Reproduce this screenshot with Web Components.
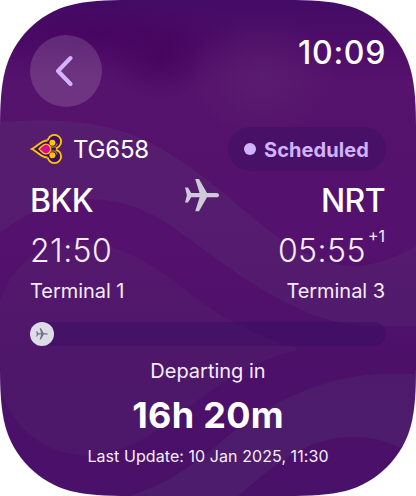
<!DOCTYPE html>
<html lang="en">
<head>
<meta charset="utf-8">
<title>Flight status</title>
<style>
  body {
    margin: 0;
    background: #ffffff;
    font-family: Inter, "Liberation Sans", sans-serif;
    --accent: #d2b3ff;
  }
</style>
</head>
<body>
<watch-screen>
  <watch-header slot="header">10:09</watch-header>
  <flight-heading>TG658<status-pill slot="status">Scheduled</status-pill></flight-heading>
  <flight-route>
    <airport-stop slot="from" code="BKK" time="21:50">Terminal 1</airport-stop>
    <airport-stop slot="to" code="NRT" time="05:55" shift="+1" align="end">Terminal 3</airport-stop>
  </flight-route>
  <flight-progress></flight-progress>
  <flight-countdown>
    <span slot="label">Departing in</span>
    16h 20m
    <span slot="updated">Last Update: 10 Jan 2025, 11:30</span>
  </flight-countdown>
</watch-screen>

<script>
const planePath = "M34 17.2C34 18.6 33 19.3 31.5 19.3H22L14 33.2H10.2L14.6 19.3H6.2L3 24.5H0L1.9 17.2L0 9.6H3L6.2 15.1H14.6L10.2 1H14L22 15.1H31.5C33 15.1 34 15.8 34 17.2Z";

function define(name, html, setup) {
  const template = document.createElement("template");
  template.innerHTML = html;
  customElements.define(name, class extends HTMLElement {
    constructor() {
      super();
      this.attachShadow({ mode: "open" });
      this.shadowRoot.appendChild(template.content.cloneNode(true));
    }

    connectedCallback() {
      if (setup) setup(this, this.shadowRoot);
    }
  });
}

define("watch-screen", `
  <style>
    :host {
      display: block;
      position: relative;
      width: 416px;
      height: 496px;
      overflow: hidden;
      color: #ffffff;
      clip-path: path("M0 130C0 80 4 55 29 29C55 4 80 0 130 0H286C336 0 361 4 387 29C412 55 416 80 416 130V366C416 416 412 441 387 467C361 492 336 496 286 496H130C80 496 55 492 29 467C4 441 0 416 0 366Z");
    }

    .backdrop {
      position: absolute;
      inset: 0;
    }

    .content {
      position: relative;
      display: flex;
      flex-direction: column;
      height: 100%;
      padding: 35px 30px 0;
      box-sizing: border-box;
    }
  </style>
  <svg class="backdrop" width="416" height="496" viewBox="0 0 416 496">
    <defs>
      <linearGradient id="base" x1="0" y1="0" x2="0" y2="1">
        <stop offset="0" stop-color="#430c66"/>
        <stop offset="0.09" stop-color="#4e0d69"/>
        <stop offset="0.17" stop-color="#56136d"/>
        <stop offset="0.5" stop-color="#54116d"/>
        <stop offset="0.74" stop-color="#4c1069"/>
        <stop offset="1" stop-color="#4a1169"/>
      </linearGradient>
      <radialGradient id="shade">
        <stop offset="0" stop-color="#43005a" stop-opacity="0.75"/>
        <stop offset="1" stop-color="#43005a" stop-opacity="0"/>
      </radialGradient>
      <radialGradient id="glow">
        <stop offset="0" stop-color="#5c2270" stop-opacity="0.6"/>
        <stop offset="1" stop-color="#5c2270" stop-opacity="0"/>
      </radialGradient>
    </defs>
    <rect width="416" height="496" fill="url(#base)"/>
    <ellipse cx="100" cy="34" rx="150" ry="36" fill="url(#shade)" opacity="0.75"/>
    <ellipse cx="160" cy="60" rx="54" ry="40" fill="url(#shade)" opacity="0.85"/>
    <ellipse cx="262" cy="76" rx="74" ry="62" fill="url(#glow)"/>
    <g fill="#5f5a78">
      <path fill-opacity="0.15" d="M0 122C60 118 112 120 160 148C205 174 229 199 262 225C300 255 330 266 355 266C380 265 400 255 416 246V326H370C335 324 315 317 285 302C235 276 210 252 165 222C110 187 50 194 0 233Z"/>
      <path fill-opacity="0.1" d="M0 300C15 262 40 243 75 242C145 240 185 300 240 325C262 336 277 343 294 347Q300 349 294 351C225 368 180 420 134 444C112 454 92 457 78 455C43 451 15 430 0 390Z"/>
      <path fill-opacity="0.16" d="M130 496C170 482 185 470 215 447C268 400 330 374 385 374H416V457C395 444 382 438 356 437C309 435 272 466 238 496Z"/>
    </g>
  </svg>
  <div class="content">
    <slot name="header"></slot>
    <slot></slot>
  </div>
`);

define("watch-header", `
  <style>
    :host {
      display: flex;
      justify-content: space-between;
      height: 72px;
      font-size: 32px;
      line-height: 35px;
      font-weight: 500;
      letter-spacing: 0.7px;
    }

    button {
      display: grid;
      place-items: center;
      width: 72px;
      height: 72px;
      padding: 0;
      border: 0;
      border-radius: 50%;
      background: rgba(255, 255, 255, 0.14);
    }

    svg {
      margin-right: 5px;
    }
  </style>
  <button aria-label="Back">
    <svg width="18" height="32" viewBox="0 0 18 32" fill="none" stroke="#d2b3ff" stroke-width="4" stroke-linecap="round" stroke-linejoin="round">
      <path d="M15.5 3L3 16L15.5 29"/>
    </svg>
  </button>
  <span><slot></slot></span>
`);

define("flight-heading", `
  <style>
    :host {
      display: flex;
      align-items: center;
      height: 44px;
      margin-top: 20px;
      font-size: 24px;
      line-height: 44px;
      letter-spacing: -0.2px;
    }

    svg {
      margin-right: 10px;
    }

    .number {
      padding-top: 2px;
    }

    .status {
      margin-left: auto;
    }
  </style>
  <svg width="33" height="32" viewBox="0 0 33 32">
    <g stroke="#ffc500" stroke-width="1.9" fill="#3a0f6a">
      <circle cx="24.4" cy="8.6" r="6.7"/>
      <circle cx="24.4" cy="23.4" r="6.7"/>
      <path d="M1.8 16C8 13 10.5 7.3 17 7.3C22 7.3 25.3 11 26 16C25.3 21 22 24.7 17 24.7C10.5 24.7 8 19 1.8 16Z" stroke="none"/>
      <path d="M17.6 7.5C10.5 7.6 8 13.2 1.8 16C8 18.8 10.5 24.4 17.6 24.5" fill="none"/>
    </g>
    <path d="M8.8 16C11.3 14.5 12.6 11.1 15.8 11.1A4.9 4.9 0 0 1 15.8 20.9C12.6 20.9 11.3 17.5 8.8 16Z" fill="#dc0a96" stroke="#ffc500" stroke-width="1.4" stroke-linejoin="round"/>
    <path d="M19.4 12.7C22.3 15.3 26.5 14.2 27 10.6M19.4 19.3C22.3 16.7 26.5 17.8 27 21.4" fill="none" stroke="#ffc500" stroke-width="0.8"/>
    <g fill="#ffc500">
      <circle cx="22.4" cy="9.8" r="3"/>
      <circle cx="22.4" cy="22.2" r="3"/>
    </g>
  </svg>
  <span class="number"><slot></slot></span>
  <span class="status"><slot name="status"></slot></span>
`);

define("status-pill", `
  <style>
    :host {
      display: flex;
      align-items: center;
      gap: 8px;
      height: 44px;
      padding: 0 17px 0 16px;
      border-radius: 22px;
      box-sizing: border-box;
      background: rgba(59, 14, 98, 0.5);
      color: var(--accent);
      font-size: 20px;
      font-weight: 700;
      letter-spacing: 0.08px;
    }

    i {
      width: 12px;
      height: 12px;
      border-radius: 50%;
      background: currentColor;
    }

    span {
      padding-top: 2px;
    }
  </style>
  <i></i>
  <span><slot></slot></span>
`);

define("flight-route", `
  <style>
    :host {
      display: flex;
      justify-content: space-between;
      height: 131px;
      margin-top: 8px;
    }

    .leg {
      flex: 1;
    }

    .leg:last-child {
      flex: 0 0 167px;
    }

    svg {
      flex: none;
      margin-top: -1px;
      fill: #cfcada;
    }
  </style>
  <div class="leg"><slot name="from"></slot></div>
  <svg width="34" height="35" viewBox="0 0 34 35"><path d="${planePath}"/></svg>
  <div class="leg"><slot name="to"></slot></div>
`);

define("airport-stop", `
  <style>
    :host {
      display: flex;
      flex-direction: column;
      white-space: nowrap;
    }

    :host([align="end"]) {
      align-items: flex-end;
      padding-right: 1px;
    }

    .code {
      margin-top: 2px;
      font-size: 32px;
      line-height: 40px;
      font-weight: 500;
      letter-spacing: -0.6px;
    }

    .time {
      display: flex;
      align-items: flex-start;
      margin-top: 10px;
      font-size: 32px;
      line-height: 40px;
      font-weight: 350;
      letter-spacing: 0.45px;
      color: #f6edff;
    }

    sup {
      margin-left: 2px;
      font-size: 16px;
      line-height: 11px;
      font-weight: 400;
      letter-spacing: 0;
    }

    .terminal {
      margin-top: 8px;
      font-size: 20px;
      line-height: 24px;
      letter-spacing: -0.05px;
      color: #f6edff;
    }
  </style>
  <span class="code"></span>
  <span class="time"><span></span></span>
  <span class="terminal"><slot></slot></span>
`, (host, root) => {
  root.querySelector(".code").textContent = host.getAttribute("code");
  root.querySelector(".time span").textContent = host.getAttribute("time");
  if (host.hasAttribute("shift")) {
    const sup = document.createElement("sup");
    sup.textContent = host.getAttribute("shift");
    root.querySelector(".time").appendChild(sup);
  }
});

define("flight-progress", `
  <style>
    :host {
      display: flex;
      height: 24px;
      margin-top: 12px;
      border-radius: 12px;
      background: rgba(59, 14, 98, 0.55);
    }

    span {
      display: grid;
      place-items: center;
      width: 24px;
      height: 24px;
      border-radius: 50%;
      background: #dedce9;
    }
  </style>
  <span>
    <svg width="12" height="12" viewBox="0 0 34 35" fill="#6b7188"><path d="${planePath}"/></svg>
  </span>
`);

define("flight-countdown", `
  <style>
    :host {
      display: flex;
      flex-direction: column;
      align-items: center;
      margin-top: 13px;
      color: #f6edff;
      white-space: nowrap;
    }

    .label {
      font-size: 20px;
      line-height: 24px;
    }

    .value {
      margin-top: 10px;
      font-size: 36px;
      line-height: 44px;
      font-weight: 700;
      letter-spacing: 0.3px;
      color: #ffffff;
    }

    .updated {
      margin-top: 9px;
      font-size: 16px;
      line-height: 20px;
      letter-spacing: 0.07px;
    }
  </style>
  <span class="label"><slot name="label"></slot></span>
  <span class="value"><slot></slot></span>
  <span class="updated"><slot name="updated"></slot></span>
`);
</script>
</body>
</html>
